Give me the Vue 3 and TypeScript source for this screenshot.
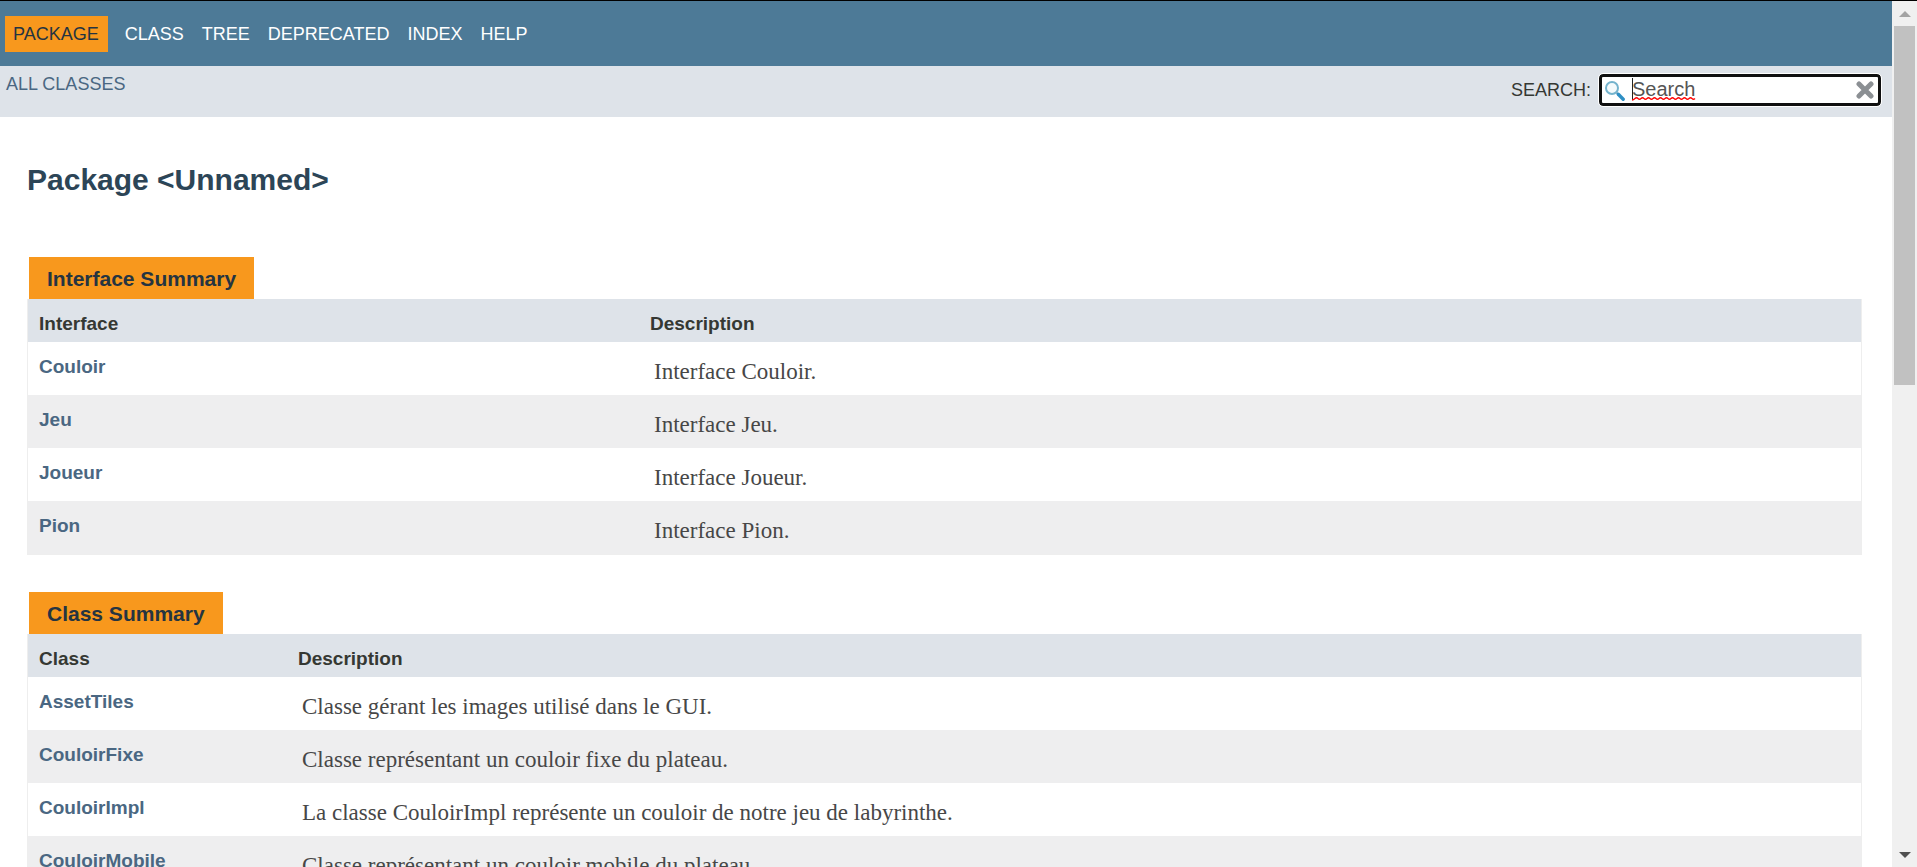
<script setup lang="ts">
import { ref } from 'vue'

interface Entry {
  name: string
  description: string
}

interface Summary {
  caption: string
  heading: string
  kind: string
  entries: Entry[]
}

const links: string[] = ['Class', 'Tree', 'Deprecated', 'Index', 'Help']
const query = ref('Search')

const summaries: Summary[] = [
  {
    caption: 'Interface Summary',
    heading: 'Interface',
    kind: 'interfaces',
    entries: [
      { name: 'Couloir', description: 'Interface Couloir.' },
      { name: 'Jeu', description: 'Interface Jeu.' },
      { name: 'Joueur', description: 'Interface Joueur.' },
      { name: 'Pion', description: 'Interface Pion.' },
    ],
  },
  {
    caption: 'Class Summary',
    heading: 'Class',
    kind: 'classes',
    entries: [
      { name: 'AssetTiles', description: 'Classe gérant les images utilisé dans le GUI.' },
      { name: 'CouloirFixe', description: 'Classe représentant un couloir fixe du plateau.' },
      { name: 'CouloirImpl', description: 'La classe CouloirImpl représente un couloir de notre jeu de labyrinthe.' },
      { name: 'CouloirMobile', description: 'Classe représentant un couloir mobile du plateau.' },
    ],
  },
]
</script>

<template>
  <div class="window">
    <div class="page">
      <header>
        <nav class="top-nav">
          <span class="current">Package</span>
          <a v-for="link in links" :key="link" href="#">{{ link }}</a>
        </nav>
        <div class="sub-nav">
          <a class="all-classes" href="#">All Classes</a>
          <div class="search">
            <label for="search">Search:</label>
            <div class="field">
              <input id="search" v-model="query" type="text" spellcheck="false" autocomplete="off" />
              <svg class="glass" viewBox="0 0 20 20" aria-hidden="true">
                <circle cx="7" cy="7" r="6" fill="#f4fafc" stroke="#74b3cd" stroke-width="2" />
                <path d="M11.5 11.5 13.5 13.5" stroke="#8fb4c6" stroke-width="2" />
                <path d="M13.3 13.3 18.2 18.2" stroke="#2e8fc4" stroke-width="3.4" stroke-linecap="round" />
              </svg>
              <span class="caret"></span>
              <svg class="squiggle" viewBox="0 0 64 4" aria-hidden="true">
                <path
                  d="M0 3 Q1.5 3 3 1.5 T6 1.5 T9 1.5 T12 1.5 T15 1.5 T18 1.5 T21 1.5 T24 1.5 T27 1.5 T30 1.5 T33 1.5 T36 1.5 T39 1.5 T42 1.5 T45 1.5 T48 1.5 T51 1.5 T54 1.5 T57 1.5 T60 1.5 T63 1.5"
                  fill="none"
                  stroke="#f00"
                  stroke-width="1.3"
                />
              </svg>
              <button type="button" aria-label="Clear search" @click="query = ''">
                <svg viewBox="0 0 18 18" aria-hidden="true">
                  <path d="M3 3 15 15M15 3 3 15" stroke="#8b8f93" stroke-width="5" stroke-linecap="round" />
                </svg>
              </button>
            </div>
          </div>
        </div>
      </header>

      <main>
        <h1>Package &lt;Unnamed&gt;</h1>
        <table v-for="summary in summaries" :key="summary.kind" :class="summary.kind">
          <caption><span>{{ summary.caption }}</span></caption>
          <thead>
            <tr>
              <th class="name" scope="col">{{ summary.heading }}</th>
              <th scope="col">Description</th>
            </tr>
          </thead>
          <tbody>
            <tr v-for="entry in summary.entries" :key="entry.name">
              <th class="name" scope="row"><a href="#">{{ entry.name }}</a></th>
              <td>{{ entry.description }}</td>
            </tr>
          </tbody>
        </table>
      </main>
    </div>

    <div class="scrollbar" aria-hidden="true">
      <svg class="arrow up" viewBox="0 0 12 6"><path d="M0 6 6 0 12 6z" /></svg>
      <div class="track"><div class="thumb"></div></div>
      <svg class="arrow down" viewBox="0 0 12 6"><path d="M0 0 6 6 12 0z" /></svg>
    </div>
  </div>
</template>

<style>
body {
  margin: 0;
  background: #fff;
}
</style>

<style scoped>
.window {
  display: flex;
  box-sizing: border-box;
  height: 100vh;
  border-top: 1px solid #000;
  overflow: hidden;
  color: #353833;
  font-family: "Liberation Sans", Arial, sans-serif;
}

.page {
  flex: 1;
  min-width: 0;
  overflow: hidden;
}

a {
  color: #4a6782;
  text-decoration: none;
}

.top-nav {
  display: flex;
  align-items: center;
  gap: 18px;
  padding: 15px 5px 14px;
  background: #4d7a97;
  font-size: 18px;
  line-height: 36px;
  text-transform: uppercase;
}

.top-nav a {
  color: #fff;
}

.current {
  margin-right: -1px;
  padding: 0 9px 0 8px;
  background: #f8981d;
  color: #253441;
}

.sub-nav {
  display: flex;
  justify-content: space-between;
  padding: 7px 10px 10px 6px;
  background: #dee3e9;
  font-size: 18px;
  line-height: 22px;
}

.all-classes,
label {
  text-transform: uppercase;
}

.search {
  display: flex;
  align-items: center;
  gap: 8px;
}

.field {
  position: relative;
  margin: 0 1px 0 0;
}

input {
  display: block;
  box-sizing: border-box;
  width: 282px;
  height: 32px;
  margin: 1px 0;
  padding: 0 30px 2px;
  border: 3px solid #101010;
  border-radius: 4px;
  outline: 1px solid #fff;
  background: #fff;
  color: #555;
  font: 20px "Liberation Sans", Arial, sans-serif;
}

.glass {
  position: absolute;
  top: 8px;
  left: 6px;
  width: 20px;
  height: 20px;
}

.caret {
  position: absolute;
  top: 5px;
  left: 33px;
  width: 1px;
  height: 22px;
  background: #222;
}

.squiggle {
  position: absolute;
  top: 24px;
  left: 33px;
  width: 64px;
  height: 4px;
}

button {
  position: absolute;
  top: 8px;
  right: 7px;
  width: 18px;
  height: 18px;
  padding: 0;
  border: 0;
  background: none;
  cursor: pointer;
}

button svg {
  display: block;
}

main {
  padding: 45px 30px 0 27px;
}

h1 {
  margin: 0 0 60px;
  color: #2c4557;
  font-size: 30px;
  line-height: 35px;
}

table {
  width: 100%;
  margin-bottom: 37px;
  border: 1px solid #eee;
  border-top: 0;
  border-spacing: 0;
  table-layout: fixed;
}

caption {
  padding-left: 2px;
  text-align: left;
}

caption span {
  display: inline-block;
  padding: 3px 18px 1px;
  background: #f8981d;
  color: #253441;
  font-size: 21px;
  font-weight: bold;
  line-height: 38px;
  vertical-align: top;
}

th,
td {
  padding: 0 11px;
  text-align: left;
  vertical-align: top;
}

th {
  font-size: 19px;
}

thead th {
  padding-top: 12px;
  padding-bottom: 5px;
  background: #dee3e9;
  line-height: 26px;
}

tbody th {
  padding-top: 12px;
  line-height: 26px;
}

.interfaces .name {
  width: 589px;
}

.classes .name {
  width: 237px;
}

td {
  padding: 17px 15px 10px;
  color: #474747;
  font-family: Georgia, "Liberation Serif", serif;
  font-size: 23px;
  line-height: 26px;
}

tbody tr:nth-child(even) {
  background: #eeeeef;
}

.scrollbar {
  display: flex;
  flex-direction: column;
  align-items: center;
  width: 25px;
  background: #f0f0f0;
}

.arrow {
  width: 12px;
  height: 6px;
}

.up {
  margin: 10px 0 9px;
  fill: #a3a3a3;
}

.down {
  margin: 10px 0 9px;
  fill: #505050;
}

.track {
  flex: 1;
  width: 21px;
}

.thumb {
  height: 44%;
  background: #c1c1c1;
}
</style>
